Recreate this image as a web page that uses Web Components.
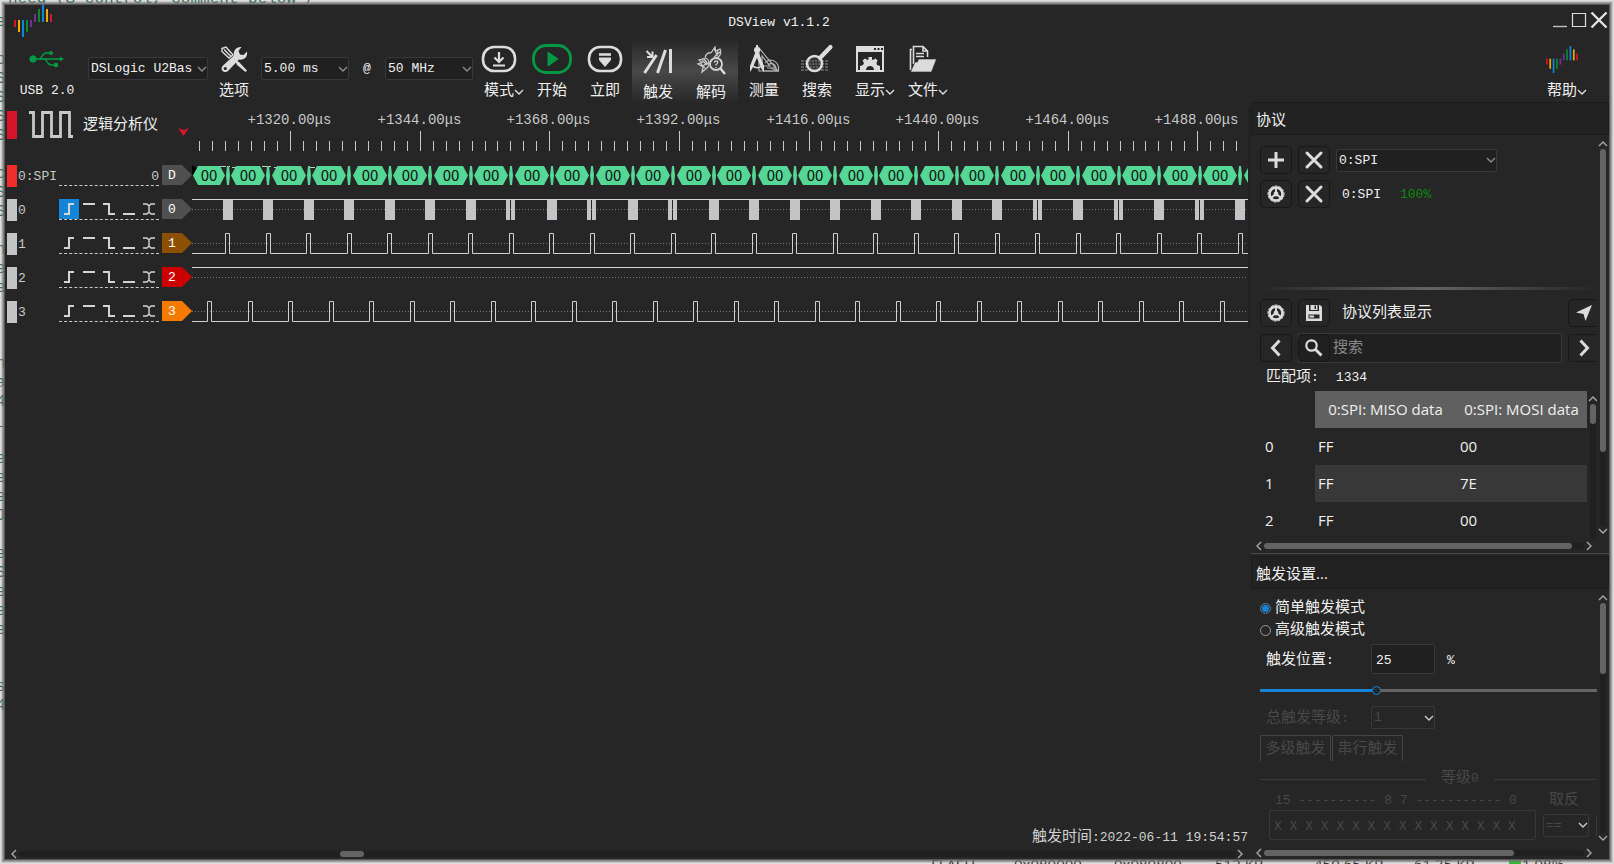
<!DOCTYPE html>
<html lang="zh-CN">
<head>
<meta charset="utf-8">
<title>DSView v1.1.2</title>
<style>
html,body{margin:0;height:100%;overflow:hidden;background:#f2f2f2}
body{font-family:"Liberation Mono","Noto Sans CJK SC",monospace;font-size:13px;line-height:20px;color:#f0f0f0}
</style>
</head>
<body>
<ds-app></ds-app>
<script>
const BASE = `
*{box-sizing:border-box}
button,input,select{font:inherit;color:inherit;margin:0;padding:0;border:0;background:none;outline:none;appearance:none}
.c{font-size:15px}
`;
function define(name, build, after) {
  customElements.define(name, class extends HTMLElement {
    connectedCallback() {
      if (this.shadowRoot) return;
      this.attachShadow({ mode: 'open' }).innerHTML = build(this);
      if (after) after(this, this.shadowRoot);
    }
  });
}

const G = '#dcdcdc';
const bars = [[0,15,7,'#d8142a'],[4,15,12,'#f2a900'],[8,15,17,'#0f86dc'],[12,15,12,'#0c8a2c'],[16,15,7,'#7030a0'],
  [20,9,8,'#7030a0'],[24,4,13,'#0c8a2c'],[28,0,17,'#0f86dc'],[32,4,13,'#f2a900'],[36,9,8,'#d8142a']];
const gear = `<circle cx="12" cy="12" r="6.500" fill="none" stroke="${G}" stroke-width="2.600"/><circle cx="12" cy="12" r="8" fill="none" stroke="${G}" stroke-width="1" stroke-dasharray="3 1"/><path d="M12 12V6M12 12L7.500 15.500M12 12L16.500 15.500" stroke="${G}" stroke-width="2"/><circle cx="12" cy="12" r="2.400" fill="${G}"/>`;
const ICONS = {
  logo: [38, 32, bars.map(b => `<rect x="${b[0]}" y="${b[1]}" width="2" height="${b[2]}" fill="${b[3]}"/>`).join('')],
  usb: [36, 18, `<g fill="#009a44" stroke="#009a44"><circle cx="4" cy="9" r="3.2"/><path d="M4 9H31" stroke-width="1.6" fill="none"/><path d="M31 6.5L35 9L31 11.5Z" stroke="none"/><path d="M10 9C13 9 13 3 17 3H20M15 9C18 9 18 15 22 15H25" fill="none" stroke-width="1.4"/><circle cx="22" cy="3" r="1.6"/><rect x="25" y="13" width="4" height="4" stroke="none"/></g>`],
  tools: [40, 30, `<g transform="translate(6 2)"><path d="M2 2.5L6 1L13 9L9 12L2 5.5Z" fill="none" stroke="${G}" stroke-width="1.4"/><path d="M4 3.5L11 10.5" stroke="${G}" stroke-width="1.4"/><path d="M15 14L19 16L27 24.5L25.5 26L17 19Z" fill="${G}"/><path d="M2.5 20L14 9.5C13 5 16 .5 21.5 1L18.5 5L20 8.5L23.5 9L27 5.5C28 11 24 14.5 19 13.5L8 25C4.500 28-.5 24 2.500 20Z" fill="${G}"/><circle cx="5.300" cy="22.500" r="1.600" fill="#262626"/></g>`],
  mode: [40, 30, `<rect x="4" y="3" width="32" height="24" rx="11" fill="none" stroke="${G}" stroke-width="2.6"/><path d="M20 8V17M15.500 13.500L20 18L24.500 13.500M14 21.500H26" fill="none" stroke="${G}" stroke-width="2.200"/>`],
  start: [40, 30, `<rect x="1.500" y="1.500" width="37" height="27" rx="12.500" fill="none" stroke="#009a44" stroke-width="2.800"/><path d="M16 8V22L26 15Z" fill="#009a44" stroke="#009a44" stroke-width="1"/>`],
  instant: [40, 30, `<rect x="4" y="3" width="32" height="24" rx="11" fill="none" stroke="${G}" stroke-width="2.600"/><path d="M14 10.500H26" stroke="${G}" stroke-width="2.600"/><path d="M14 13.500H26V16L20 23L14 16Z" fill="${G}"/>`],
  trigger: [40, 30, `<g fill="none" stroke="${G}" stroke-width="3"><path d="M6.500 27L18.500 9M19.500 27L27.500 4M32.500 3V27"/><path d="M8.500 5L14 10.500M14.500 5.500V11H9" stroke-width="2"/></g>`],
  decode: [40, 30, `<g fill="none" stroke="#c8c8c8" stroke-width="1.300"><path d="M20 7C17 6 14 9 14.500 11.500M20 7L24 1L24.500 5L29 3C31 8 28 12 24 11.500M23 2L25.500 8M27 4L26 10M29 6L23 11"/><path d="M14.500 12L8 14L11 16.500L7 18L12 21L11 26L17 21C19 17 18 13 14.500 12ZM11 14L16 19M9 17L14 22M13 13L17 18M12 20L16 17"/></g><circle cx="25" cy="18" r="6" fill="#404040" stroke="#d4d4d4" stroke-width="1.800"/><path d="M23 16.500Q25 13.500 26.800 16Q26.500 18 25 18.500V19.500M25 21V22" fill="none" stroke="#d4d4d4" stroke-width="1.300"/><path d="M29.500 22.500L34 28" stroke="${G}" stroke-width="2.400"/>`],
  measure: [40, 30, `<g fill="none" stroke="#b0b0b0" stroke-width="1.200"><path d="M15 27V4L34 27ZM18 22V12L26 22ZM27 24L34 27"/><path d="M21 19C25 14 33 16 34.500 23V27H19M24 21C27 18 31 19 32 24H23"/></g><circle cx="13" cy="6" r="3" fill="${G}"/><path d="M13 1V4" stroke="${G}" stroke-width="2"/><path d="M11.500 8L6 22V28L8 25L13 14L17.500 25L20 28V22L14.500 8Z" fill="${G}"/><path d="M8 21Q12 26 18 22" fill="none" stroke="${G}" stroke-width="1.500"/>`],
  search: [40, 30, `<g stroke="#5c5c5c" stroke-width="1.800" stroke-dasharray="3 1"><path d="M4 17H31M4 20H31M4 23H31M4 26H31"/></g><circle cx="17.500" cy="19.500" r="7.500" fill="#333" stroke="${G}" stroke-width="2.600"/><g stroke="#888" stroke-width="1.200" stroke-dasharray="2 1"><path d="M12 17H23M12 20H23M13 23H22"/></g><path d="M23 14L33.500 3" stroke="${G}" stroke-width="4.200" stroke-linecap="round"/>`],
  display: [40, 30, `<path d="M6 2H34V28H6Z" fill="${G}"/><path d="M8 8H32V26H8Z" fill="#262626"/><path d="M24 4H26V6H24ZM27.500 4H29.500V6H27.500ZM31 4H33V6H31Z" fill="#262626"/><path d="M10 26V22L13 21L14 19L12.500 16.500L15 14.500L17.500 16L18.500 15.500V13H22V15.500L23 16L25.500 14.500L27.500 16.500L26.500 19L27 21L30 22V26H24C24 20.500 16 20.500 16 26Z" fill="${G}"/>`],
  file: [40, 30, `<path d="M10.500 20V2.500H20L24.500 7V13M20 2.500V7H24.500M13 9.500H21M13 12.500H21" fill="none" stroke="${G}" stroke-width="1.600"/><path d="M9 5.500H7.500V26" fill="none" stroke="${G}" stroke-width="1.600"/><path d="M15.500 15H33.500L28.500 28H7.500L12 18H14.500Z" fill="${G}" stroke="#262626" stroke-width=".6"/>`],
  plus: [24, 24, `<path d="M12 4V20M4 12H20" stroke="${G}" stroke-width="3"/>`],
  cross: [24, 24, `<path d="M5 5L19 19M19 5L5 19" stroke="${G}" stroke-width="3" stroke-linecap="round"/>`],
  gear: [24, 24, gear],
  save: [24, 24, `<path d="M4 4H7V10H17V4H18L20 6V20H4Z" fill="${G}"/><path d="M8.500 4H15.500V9H8.500Z" fill="${G}"/><path d="M12.500 4.500H14V8H12.500Z" fill="#262626"/><path d="M6.500 13.500H17.500V17.500H6.500Z" fill="#262626"/><path d="M7.500 14.500H12V16.500H7.500Z" fill="${G}"/>`],
  nav: [24, 24, `<path d="M20 4L13.500 20L11.500 13L4 11.500Z" fill="${G}"/>`],
  prev: [24, 24, `<path d="M15.500 4.500L8.500 12L15.500 19.500" fill="none" stroke="${G}" stroke-width="3"/>`],
  next: [24, 24, `<path d="M8.500 4.500L15.500 12L8.500 19.500" fill="none" stroke="${G}" stroke-width="3"/>`],
  find: [24, 24, `<circle cx="9.500" cy="9.500" r="5.200" fill="none" stroke="${G}" stroke-width="2.200"/><path d="M13.500 13.500L19.500 19.500" stroke="${G}" stroke-width="3"/>`],
  chev: [10, 10, `<path d="M1 3L5 7L9 3" fill="none" stroke="currentColor" stroke-width="1.400"/>`],
  up: [10, 10, `<path d="M1 7L5 3L9 7" fill="none" stroke="currentColor" stroke-width="1.400"/>`],
  left: [10, 10, `<path d="M7 1L3 5L7 9" fill="none" stroke="currentColor" stroke-width="1.400"/>`],
  right: [10, 10, `<path d="M3 1L7 5L3 9" fill="none" stroke="currentColor" stroke-width="1.400"/>`],
  min: [16, 20, `<path d="M1 16.500H15" stroke="#c0c0c0" stroke-width="1.400"/>`],
  max: [16, 20, `<path d="M1.500 3.500H14.500V16.500H1.500Z" fill="none" stroke="#dcdcdc" stroke-width="1.200"/>`],
  close: [18, 20, `<path d="M1.500 2.500L16.500 17.500M16.500 2.500L1.500 17.500" stroke="#e4e4e4" stroke-width="2.400"/>`],
  square: [44, 28, `<path d="M0 1.500H4.500V25.500H13.500V1.500H22.500V25.500H31.500V1.500H40.500V25.500H44" fill="none" stroke="#c8c8c8" stroke-width="2.800"/>`]
};
define('ds-icon', el => {
  const [w, h, body] = ICONS[el.getAttribute('name')];
  const s = +(el.getAttribute('width') || w);
  return `<style>:host{display:block;flex:none;line-height:0}</style><svg width="${s}" height="${Math.round(h * s / w)}" viewBox="0 0 ${w} ${h}" aria-hidden="true">${body}</svg>`;
});

define('ds-select', el => `<style>${BASE}
:host{display:grid;grid-template-columns:minmax(0,1fr);height:23px;flex:none}
select,ds-icon{grid-area:1/1}
select{width:100%;height:100%;border:1px solid #383838;border-radius:2px;background:#202020;padding:1px 0 0 2px;overflow:hidden}
ds-icon{align-self:center;justify-self:end;margin-right:1px;pointer-events:none;color:#8c8c8c}
:host([off]) select{background:#262626;color:#484848;opacity:1}:host([off]) ds-icon{color:#ccc}
</style><select aria-label="${el.getAttribute('label')}" ${el.hasAttribute('off') ? 'disabled' : ''}><option>${el.getAttribute('value')}</option></select><ds-icon name="chev"></ds-icon>`);

define('ds-tool', el => `<style>${BASE}
:host{display:block;flex:none;width:53px}
button{position:relative;display:flex;flex-direction:column;align-items:center;gap:8px;width:100%;height:66px;padding:6px 1px 0 0;font-size:15px}
.box{display:flex;height:30px;align-items:center}
:host([active]) button{padding-top:8px;background:linear-gradient(#262626,#484848 50%,#262626)}
.arrow{position:absolute;left:41px;bottom:7px;color:#ddd}
</style><button type="button"><span class="box"><ds-icon name="${el.getAttribute('icon')}" ${el.hasAttribute('size') ? `width="${el.getAttribute('size')}"` : ''}></ds-icon></span><span><slot></slot></span>${el.hasAttribute('menu') ? '<ds-icon class="arrow" name="chev"></ds-icon>' : ''}</button>`);

define('ds-icon-button', el => `<style>${BASE}
:host{display:block;flex:none}
button{display:grid;place-items:center;width:32px;height:28px;border:1px solid #181818;border-radius:5px}
</style><button type="button" aria-label="${el.getAttribute('label')}"><ds-icon name="${el.getAttribute('icon')}"></ds-icon></button>`);

define('ds-scrollbar', el => {
  const v = el.hasAttribute('vertical'), [a, b, c] = el.getAttribute('parts').split(' ');
  return `<style>${BASE}
:host{display:flex;flex-direction:${v ? 'column' : 'row'};align-items:center;color:#a8a8a8}
.track{flex:1;display:flex;flex-direction:inherit;min-width:0;min-height:0;background:#202020;border-radius:3px;${v ? 'width' : 'height'}:6px}
.thumb{background:#646464;border-radius:3px}
</style><ds-icon name="${v ? 'up' : 'left'}"></ds-icon><div class="track"><i style="flex:${a} 1 0"></i><i class="thumb" style="flex:${b} 1 0"></i><i style="flex:${c} 1 0"></i></div>${el.hasAttribute('noend') ? '' : `<ds-icon name="${v ? 'chev' : 'right'}"></ds-icon>`}`;
});

define('ds-titlebar', () => `<style>${BASE}
:host{display:grid;grid-template-columns:minmax(0,1fr) auto minmax(0,1fr) 64px;height:33px;padding:0 1px 0 9px}
.title{padding-top:8px}
.ctl{display:flex;justify-content:flex-end;gap:3px;padding-top:5px;grid-column:3/5}
.ctl button{height:20px}
</style><ds-icon name="logo"></ds-icon><span class="title">DSView v1.1.2</span>
<div class="ctl"><button aria-label="最小化"><ds-icon name="min"></ds-icon></button><button aria-label="最大化"><ds-icon name="max"></ds-icon></button><button aria-label="关闭"><ds-icon name="close"></ds-icon></button></div>`);

define('ds-toolbar', () => `<style>${BASE}
:host{display:flex;height:64px;padding-right:20px}
.usb{width:83px;display:flex;flex-direction:column;align-items:center;padding:12px 0 0 1px;gap:13px}
.sel{margin-top:19px}
.at{width:36px;text-align:center;padding-top:21px}
.fill{flex:1}
</style>
<div class="usb"><ds-icon name="usb"></ds-icon><span>USB 2.0</span></div>
<ds-select class="sel" style="width:120px" label="设备" value="DSLogic U2Bas"></ds-select>
<ds-tool icon="tools">选项</ds-tool>
<ds-select class="sel" style="width:88px" label="采样时长" value="5.00 ms"></ds-select>
<span class="at">@</span>
<ds-select class="sel" style="width:88px" label="采样率" value="50 MHz"></ds-select>
<ds-tool icon="mode" menu>模式</ds-tool><ds-tool icon="start">开始</ds-tool><ds-tool icon="instant">立即</ds-tool>
<ds-tool icon="trigger" active>触发</ds-tool><ds-tool icon="decode" active>解码</ds-tool>
<ds-tool icon="measure">测量</ds-tool><ds-tool icon="search">搜索</ds-tool>
<ds-tool icon="display" menu>显示</ds-tool><ds-tool icon="file" menu>文件</ds-tool>
<span class="fill"></span><ds-tool icon="logo" size="32" menu>帮助</ds-tool>`);

const edges = [
  'M5 15H10V5H15', 'M4 5H16', 'M4 5H10V15H16', 'M4 15H16', 'M4 5H8L10 7V13L8 15H4M16 5H12L10 7V13L12 15H16'
];
define('ds-channel', el => {
  const decoder = el.hasAttribute('decoder'), sel = el.getAttribute('edge');
  return `<style>${BASE}
:host{display:grid;grid-template-columns:10px 42px 100px 3px 30px;height:34px;padding:7px 0 7px 2px;color:#c8c8c8}
.mark{background:${el.getAttribute('mark') || '#c3c4c6'}}
.name{padding-left:1px;padding-top:2px;white-space:nowrap}
.line{display:flex;height:21px;border-bottom:1px dashed #c8c8c8}
.line span{margin-left:auto;padding-top:2px}
button{width:20px;height:20px}.on{background:#1485d6}
svg{display:block}
.tag{display:grid;grid-column:5;width:30px;height:20px;color:#fff}
.tag>*{grid-area:1/1}.tag span{width:20px;line-height:22px;text-align:center}
</style><span class="mark"></span><span class="name"><slot></slot></span><div class="line">${decoder ? '<span>0</span>' :
    edges.map((d, i) => `<button aria-label="触发边沿 ${i + 1}" class="${String(i) === sel ? 'on' : ''}"><svg width="20" height="20"><path d="${d}" fill="none" stroke="#d4d4d4" stroke-width="${i === 4 ? 1.4 : 2}"/></svg></button>`).join('')}</div>
<div class="tag"><svg width="30" height="20"><path d="M0 0H20L30 10L20 20H0Z" fill="${el.getAttribute('color')}"/></svg><span>${el.getAttribute('tag')}</span></div>`;
});

// Signal plot: the pattern repeats to fill whatever width is available.
define('ds-plot', () => `<style>:host{display:block;min-width:0;overflow:hidden;border-right:3px solid #222}svg{display:block;width:100%;height:221px}text{font-family:"Liberation Mono",monospace}.v{font-family:"Noto Sans CJK SC",sans-serif}</style><svg></svg>`,
  (el, root) => {
    const svg = root.querySelector('svg');
    const draw = () => {
      const W = Math.max(el.clientWidth, 200), P = 40.5, n = Math.ceil(W / P) + 1;
      const R = Math.round;
      let o = '', ticks = '', labels = '';
      for (let i = 0; 8 + i * 12.96 < W - 8; i++) {
        const x = R(7.4 + i * 12.96) + .5, major = i % 10 === 7;
        ticks += `M${x} ${major ? 24 : 34}V44`;
        if (major) labels += `<text x="${x - 1}" y="17" text-anchor="middle" font-size="14" fill="#c8c8c8">+${1320 + 24 * (i - 7) / 10}.00μs</text>`;
      }
      o += `<path d="${ticks}" stroke="#c8c8c8" fill="none"/>${labels}`;
      o += `<path d="M0 58L6 62L0 68Z" fill="#000"/><path d="M28 59.500H34M36 59.500H38M40 60.500H44M70 59.500H75M77 59.500H79M82 60.500H85M118 60.500H123" stroke="#c8c8c8" stroke-width="1"/>`;
      let hex = '', gaps = '', t = '', p1 = 'M0 146.500', p3 = 'M0 214.500', burst = '';
      const split = [7, 9, 11, 20, 22, 24];
      for (let i = 0; i < n; i++) {
        const c = R(34.5 + i * P), a = i ? c - 36 : 1, b = c - 2;
        if (a < W) {
          hex += `M${a} 68.500L${a + 5} 59H${b - 5}L${b} 68.500L${b - 5} 78H${a + 5}Z`;
          gaps += `M${c - 1} 68.500L${c} 59H${c + 2}L${c + 3} 68.500L${c + 2} 78H${c}Z`;
          if (b < W) t += `<text class="v" x="${R((a + b) / 2)}" y="74" text-anchor="middle" font-size="15" fill="#101010">00</text>`;
        }
        const q = R(35.5 + i * P);
        burst += split.includes(i) ? `M${q - 5} 92H${q - 1}V113H${q - 5}ZM${q} 92H${q + 4}V113H${q}Z` : `M${q - 5} 92H${q + 5}V113H${q - 5}Z`;
        const x1 = R(33 + i * P) + .5;
        p1 += `H${x1}V126.500H${x1 + 4}V146.500`;
        const x3 = R(15 + i * P) + .5;
        p3 += `H${x3}V194.500H${x3 + 4}V214.500`;
      }
      o += `<path d="${hex}${gaps}" fill="#55d896"/>${t}`;
      o += `<path d="M0 102.500H${W}M0 136.500H${W}M0 170.500H${W}M0 204.500H${W}" stroke="#777" stroke-dasharray="1 2"/>`;
      o += `<path d="${burst}" fill="#c3c4c6"/><path d="M0 92.500H${W}M0 160.500H${W}" stroke="#d4d4d4"/>`;
      o += `<path d="${p1}H${W}${p3}H${W}" fill="none" stroke="#d0d0d0"/>`;
      svg.innerHTML = o;
    };
    draw();
    new ResizeObserver(draw).observe(el);
  });

define('ds-analyzer', () => `<style>${BASE}
:host{display:flex;flex-direction:column;min-width:0;padding-top:5px}
.view{display:grid;grid-template-columns:187px minmax(0,1fr);flex:1;align-content:start}
.head{display:grid;grid-template-columns:10px 44px 1fr auto;height:51px;padding:4px 3px 0 2px;align-items:start;column-gap:12px}
.red{height:28px;background:#d8142a}
.head span.c{margin-left:-2px;padding-top:5px}
.head svg{margin-top:17px}
.foot{text-align:right;padding-right:3px;height:21px;color:#d0d0d0;white-space:nowrap}
ds-scrollbar{height:10px;margin:0 6px 0 4px}
</style>
<div class="view"><div><div class="head"><i class="red"></i><ds-icon name="square"></ds-icon><span class="c">逻辑分析仪</span><svg width="11" height="8"><path d="M0 0L5.500 2L11 0L5.500 8Z" fill="#d8142a"/></svg></div>
<ds-channel decoder mark="#f22b2b" color="#505050" tag="D">0:SPI</ds-channel>
<ds-channel color="#505050" tag="0" edge="0">0</ds-channel>
<ds-channel color="#8c5000" tag="1">1</ds-channel>
<ds-channel color="#cc0000" tag="2">2</ds-channel>
<ds-channel color="#f57a00" tag="3">3</ds-channel></div><ds-plot></ds-plot></div>
<div class="foot"><span class="c">触发时间</span>:2022-06-11 19:54:57</div>
<ds-scrollbar parts="322 24 872"></ds-scrollbar>`);

define('ds-dock', () => `<style>${BASE}
:host{display:flex;flex-direction:column;min-height:0;overflow:hidden}
h2{flex:none;margin:0;height:33px;padding:0 4px;border:1px solid #1c1c1c;background:#222;font:15px/32px "Open Sans","Noto Sans CJK SC",sans-serif}
.body{flex:1;min-height:0;display:grid;grid-template-columns:minmax(0,1fr) 10px;column-gap:1px;padding:0 1px 0 9px}
.pane{min-height:0;min-width:0;overflow:hidden}
</style><h2><slot name="title"></slot></h2><div class="body"><div class="pane"><slot></slot></div><slot name="vbar"></slot></div><slot name="hbar"></slot>`);

define('ds-protocol-panel', () => `<style>${BASE}
:host{display:flex;flex-direction:column;min-height:0}
ds-dock{flex:1}
.upper{height:152px;padding-top:11px;display:flex;flex-direction:column;gap:6px}
.row{display:flex;align-items:center;gap:6px;height:28px}
.split{height:3px;background:linear-gradient(90deg,#262626,#646464 50%,#262626)}
.lower{padding-top:9px;display:flex;flex-direction:column}
.lower .row+.row{margin-top:7px}
.name,.ok{padding:2px 0 0 6px}.ok{color:#0c8a0c;padding-left:13px}
.push{margin-left:auto;width:29px}
.find{flex:1;display:flex;align-items:center;height:30px;border:1px solid #383838;border-radius:2px;background:#202020}
.find ds-icon-button{margin-left:-1px}
.find input{flex:1;min-width:0;padding:2px 0 0 3px;font-size:15px}
.find input::placeholder{color:#888;opacity:1}
.match{height:29px;display:flex;gap:17px;padding:6px 0 0 6px}
.list{display:flex}
table{table-layout:fixed;width:327px;border-collapse:collapse;font:15px/37px "Open Sans","Noto Sans CJK SC",sans-serif}
th,td{padding:0;height:37px;font-weight:400;text-align:left;white-space:nowrap}
thead th+th{background:#606060;text-align:center}
tbody th{padding-left:5px}td{padding-left:3px}td+td{padding-left:4px}
tbody tr:nth-child(even) td{background:#383838}
ds-scrollbar.v{padding:4px 0 3px}
ds-scrollbar.h{height:13px;margin:0 15px 1px 3px}
.list ds-scrollbar{height:150px;width:10px;padding-top:3px;margin-left:1px}
</style>
<ds-dock><span slot="title">协议</span>
<div class="upper"><div class="row"><ds-icon-button icon="plus" label="添加"></ds-icon-button><ds-icon-button icon="cross" label="删除全部"></ds-icon-button><ds-select style="width:161px" label="协议" value="0:SPI"></ds-select></div>
<div class="row"><ds-icon-button icon="gear" label="设置"></ds-icon-button><ds-icon-button icon="cross" label="删除"></ds-icon-button><span class="name">0:SPI</span><span class="ok">100%</span></div></div>
<div class="split"></div>
<div class="lower"><div class="row"><ds-icon-button icon="gear" label="列表设置"></ds-icon-button><ds-icon-button icon="save" label="保存"></ds-icon-button><span class="name c">协议列表显示</span><ds-icon-button class="push" icon="nav" label="定位"></ds-icon-button></div>
<div class="row"><ds-icon-button icon="prev" label="上一个"></ds-icon-button><div class="find"><ds-icon-button icon="find" label="搜索"></ds-icon-button><input type="text" placeholder="搜索" aria-label="搜索"></div><ds-icon-button class="push" icon="next" label="下一个"></ds-icon-button></div>
<div class="match"><span><span class="c">匹配项</span>:</span><span>1334</span></div>
<div class="list"><table><colgroup><col style="width:55px"><col style="width:141px"><col style="width:131px"></colgroup><thead><tr><th></th><th>0:SPI: MISO data</th><th>0:SPI: MOSI data</th></tr></thead>
<tbody><tr><th>0</th><td>FF</td><td>00</td></tr><tr><th>1</th><td>FF</td><td>7E</td></tr><tr><th>2</th><td>FF</td><td>00</td></tr><tr><th></th><td></td><td></td></tr></tbody></table><ds-scrollbar vertical noend parts="0 20 118"></ds-scrollbar></div></div>
<ds-scrollbar class="v" slot="vbar" vertical parts="0 304 75"></ds-scrollbar>
<ds-scrollbar class="h" slot="hbar" parts="0 311 12"></ds-scrollbar></ds-dock>`);

define('ds-trigger-panel', () => `<style>${BASE}
:host{display:flex;flex-direction:column;min-height:0;border-top:1px solid #4a4a4a;padding-top:2px}
ds-dock{flex:1}
.radios{padding-top:9px}
.radio{display:flex;align-items:center;gap:4px;height:22px;font-size:15px}
.radio input{width:11px;height:11px;margin-top:-2px;border:1px solid #999;border-radius:50%}
.radio input:checked{background:#1485d6;border-color:#5b6d7a;box-shadow:inset 0 0 0 1px #262626}
.field{display:flex;align-items:center;padding-left:6px}
.field label,.field>span{padding-top:3px}
.field label{width:105px}
.pos{height:30px;margin-top:2px}
.pos input{width:64px;height:30px;border:1px solid #383838;border-radius:2px;background:#202020;padding:2px 0 0 4px;margin-right:12px}
input[type=range]{display:block;width:100%;height:10px;margin:11px 0;background:linear-gradient(#1485d6,#1485d6) 0 50%/115px 3px no-repeat,linear-gradient(#646464,#646464) 0 50%/100% 3px no-repeat}
input[type=range]::-webkit-slider-thumb{appearance:none;width:9px;height:9px;border:1px solid #1485d6;border-radius:50%;background:#262626}
.dim{color:#484848}
.total{height:23px}
.tabs{display:flex;gap:1px;margin-top:6px}
.tabs button{width:71px;height:26px;padding-top:3px;border:1px solid #444;border-bottom:0;border-radius:2px 2px 0 0;font-size:15px}
.legend{display:flex;align-items:center;gap:15px;height:26px;margin-top:5px}
.legend::before,.legend::after{content:"";height:1px;background:#3a3a3a;width:166px}
.legend::after{flex:1}
.bits{display:flex;height:18px;line-height:18px;padding-left:15px;white-space:pre}
.bits .c{margin-left:auto;padding-right:18px}
.vals{display:flex;align-items:center;gap:7px;padding-left:9px}
.vals input{width:267px;height:30px;flex:none;border:1px solid #383838;border-radius:2px;padding:2px 0 0 4px;color:#484848}
ds-scrollbar.v{padding:4px 0 3px}
ds-scrollbar.h{height:13px;flex:none;margin:0 15px 0 3px}
</style>
<ds-dock><span slot="title">触发设置...</span>
<div class="radios"><label class="radio"><input type="radio" name="mode" checked>简单触发模式</label><label class="radio"><input type="radio" name="mode">高级触发模式</label></div>
<div class="field pos"><label for="pos"><span class="c">触发位置</span>:</label><input id="pos" type="text" value="25"><span>%</span></div>
<input type="range" min="0" max="100" value="34" aria-label="触发位置">
<div class="field total dim"><label><span class="c">总触发等级</span>:</label><ds-select off style="width:64px" label="总触发等级" value="1"></ds-select></div>
<div class="tabs dim"><button type="button" disabled>多级触发</button><button type="button" disabled>串行触发</button></div>
<div class="legend dim"><span><span class="c">等级</span>0</span></div>
<div class="bits dim"><span>15 ---------- 8 7 ----------- 0</span><span class="c">取反</span></div>
<div class="vals dim"><input type="text" disabled aria-label="触发值" value="X X X X X X X X X X X X X X X X"><ds-select off style="width:46px" label="取反" value="=="></ds-select><ds-select off style="width:46px" label="计数" value=""></ds-select></div>
<ds-scrollbar class="v" slot="vbar" vertical parts="0 70 158"></ds-scrollbar>
<ds-scrollbar class="h" slot="hbar" parts="0 252 71"></ds-scrollbar></ds-dock>`);

define('ds-app', () => `<style>${BASE}
:host{display:block;height:100vh;position:relative;overflow:hidden}
.behind{position:absolute;color:#1f6a4c;font-size:16px;line-height:19px;white-space:pre}
.top{left:8px;top:-10px}
.side{left:-4px;top:13px}
.bottom{left:931px;bottom:-10px;display:grid;grid-template-columns:83px 100px 101px 99px 100px 95px 13px auto;color:#111;font-size:15px;font-family:"Open Sans",sans-serif;line-height:20px}
.bottom i{width:12px;height:18px;background:#18c818}
.win{position:relative;display:flex;flex-direction:column;height:calc(100% - 10px);margin:5px;background:#262626;box-shadow:0 0 0 1px #5a5a5a,0 0 0 2px #6a6a6a99,0 0 0 3px #70707066,0 0 0 4px #80808044,0 0 0 5px #90909033}
.main{flex:1;min-height:0;display:grid;grid-template-columns:minmax(0,1fr) 358px}
.side-docks{display:flex;flex-direction:column;min-height:0}
.side-docks ds-protocol-panel{flex:453 1 0}.side-docks ds-trigger-panel{flex:304 1 0}
</style>
<div class="behind top" aria-hidden="true">need (S_control, comment below*/</div>
<div class="behind side" aria-hidden="true">e

p
S
S
S
S

c
S
S

n
e
e



n
a
4
_

e
e
e
J

e
S
e
e
e


s
4</div>
<div class="behind bottom" aria-hidden="true"><span>FLASH</span><span>0x080000</span><span>0x080800</span><span>512 KB</span><span>450.65 KB</span><span>61.35 KB</span><i></i><span>1.98%</span></div>
<div class="win"><ds-titlebar></ds-titlebar><ds-toolbar></ds-toolbar>
<div class="main"><ds-analyzer></ds-analyzer><div class="side-docks"><ds-protocol-panel></ds-protocol-panel><ds-trigger-panel></ds-trigger-panel></div></div></div>`);
</script>
</body>
</html>
